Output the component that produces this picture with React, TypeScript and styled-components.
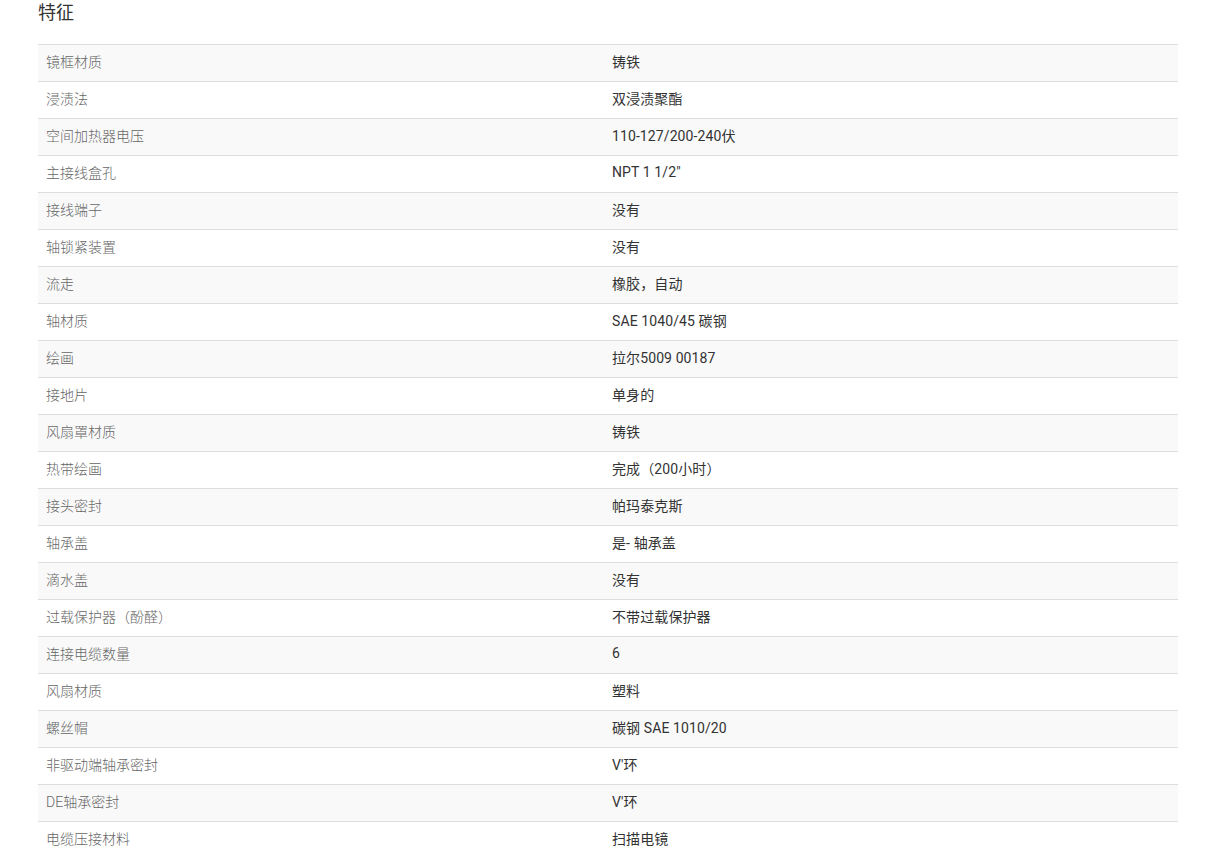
import React from 'react';
import styled, { createGlobalStyle } from 'styled-components';

const GlobalStyle = createGlobalStyle`
  html, body {
    margin: 0;
    padding: 0;
    background: #fff;
  }
  body {
    font-family: Roboto, 'Noto Sans CJK SC', sans-serif;
  }
`;

const Page = styled.div`
  padding: 0 33px 0 38px;
`;

const Title = styled.h3`
  margin: 0 0 18px;
  font-size: 18px;
  line-height: 26px;
  font-weight: 400;
  color: #333;
  font-family: Roboto, 'Noto Sans CJK SC', sans-serif;
`;

const Table = styled.table`
  width: 1140px;
  border-collapse: collapse;
  font-size: 14px;
`;

const Row = styled.tr<{ $odd: boolean }>`
  background: ${p => (p.$odd ? '#f9f9f9' : '#fff')};
  border-top: 1px solid #ddd;
`;

const Label = styled.td`
  width: 550px;
  height: 32px;
  padding: 0 8px 4px;
  color: #666;
  font-weight: 300;
  vertical-align: middle;
`;

const Value = styled.td`
  padding: 0 8px 4px;
  color: #333;
  font-weight: 400;
  letter-spacing: 0.1px;
  vertical-align: middle;
`;

const specs: [string, string][] = [
  ['镜框材质', '铸铁'],
  ['浸渍法', '双浸渍聚酯'],
  ['空间加热器电压', '110-127/200-240伏'],
  ['主接线盒孔', 'NPT 1 1/2"'],
  ['接线端子', '没有'],
  ['轴锁紧装置', '没有'],
  ['流走', '橡胶，自动'],
  ['轴材质', 'SAE 1040/45 碳钢'],
  ['绘画', '拉尔5009 00187'],
  ['接地片', '单身的'],
  ['风扇罩材质', '铸铁'],
  ['热带绘画', '完成（200小时）'],
  ['接头密封', '帕玛泰克斯'],
  ['轴承盖', '是- 轴承盖'],
  ['滴水盖', '没有'],
  ['过载保护器（酚醛）', '不带过载保护器'],
  ['连接电缆数量', '6'],
  ['风扇材质', '塑料'],
  ['螺丝帽', '碳钢 SAE 1010/20'],
  ['非驱动端轴承密封', "V'环"],
  ['DE轴承密封', "V'环"],
  ['电缆压接材料', '扫描电镜'],
];

export default function App() {
  return (
    <Page>
      <GlobalStyle />
      <Title>特征</Title>
      <Table>
        <tbody>
          {specs.map(([k, v], i) => (
            <Row key={k} $odd={i % 2 === 0}>
              <Label>{k}</Label>
              <Value>{v}</Value>
            </Row>
          ))}
        </tbody>
      </Table>
    </Page>
  );
}
